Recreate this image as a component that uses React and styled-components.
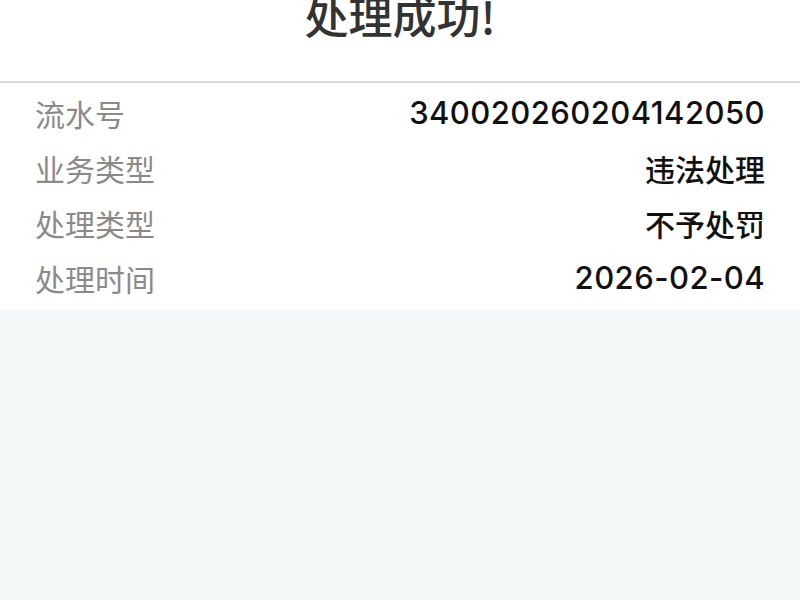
import React from "react";
import styled, { createGlobalStyle } from "styled-components";

const GlobalStyle = createGlobalStyle`
  html, body {
    margin: 0;
    padding: 0;
    background: #f4f7f8;
  }
  body {
    font-family: "Noto Sans CJK SC", "Noto Sans", sans-serif;
  }
`;

const Page = styled.div`
  width: 800px;
  min-height: 600px;
  background: #f4f7f8;
`;

const Header = styled.header`
  height: 81px;
  background: #ffffff;
  border-bottom: 2px solid #d9d9d9;
  display: flex;
  justify-content: center;
  align-items: flex-start;
  overflow: hidden;
`;

const Title = styled.h1`
  margin: -9px 0 0;
  font-size: 44px;
  line-height: 48px;
  font-weight: 500;
  color: #333333;
`;

const Details = styled.section`
  background: #ffffff;
  padding: 2px 35px 5px;
`;

const Row = styled.div`
  height: 55px;
  display: flex;
  align-items: center;
  justify-content: space-between;
`;

const Label = styled.span`
  font-size: 30px;
  color: #8a8a8a;
`;

const Value = styled.span`
  font-family: ${(p) =>
    p.$numeric ? 'Inter, "Noto Sans CJK SC", sans-serif' : '"Noto Sans CJK SC", sans-serif'};
  font-size: ${(p) => (p.$numeric ? "31px" : "30px")};
  letter-spacing: ${(p) => (p.$numeric ? "0.45px" : "0")};
  font-weight: 500;
  color: #111111;
`;

const rows = [
  { label: "流水号", value: "340020260204142050", numeric: true },
  { label: "业务类型", value: "违法处理" },
  { label: "处理类型", value: "不予处罚" },
  { label: "处理时间", value: "2026-02-04", numeric: true },
];

export default function App() {
  return (
    <Page>
      <GlobalStyle />
      <Header>
        <Title>处理成功!</Title>
      </Header>
      <Details>
        {rows.map((r) => (
          <Row key={r.label}>
            <Label>{r.label}</Label>
            <Value $numeric={r.numeric}>{r.value}</Value>
          </Row>
        ))}
      </Details>
    </Page>
  );
}
